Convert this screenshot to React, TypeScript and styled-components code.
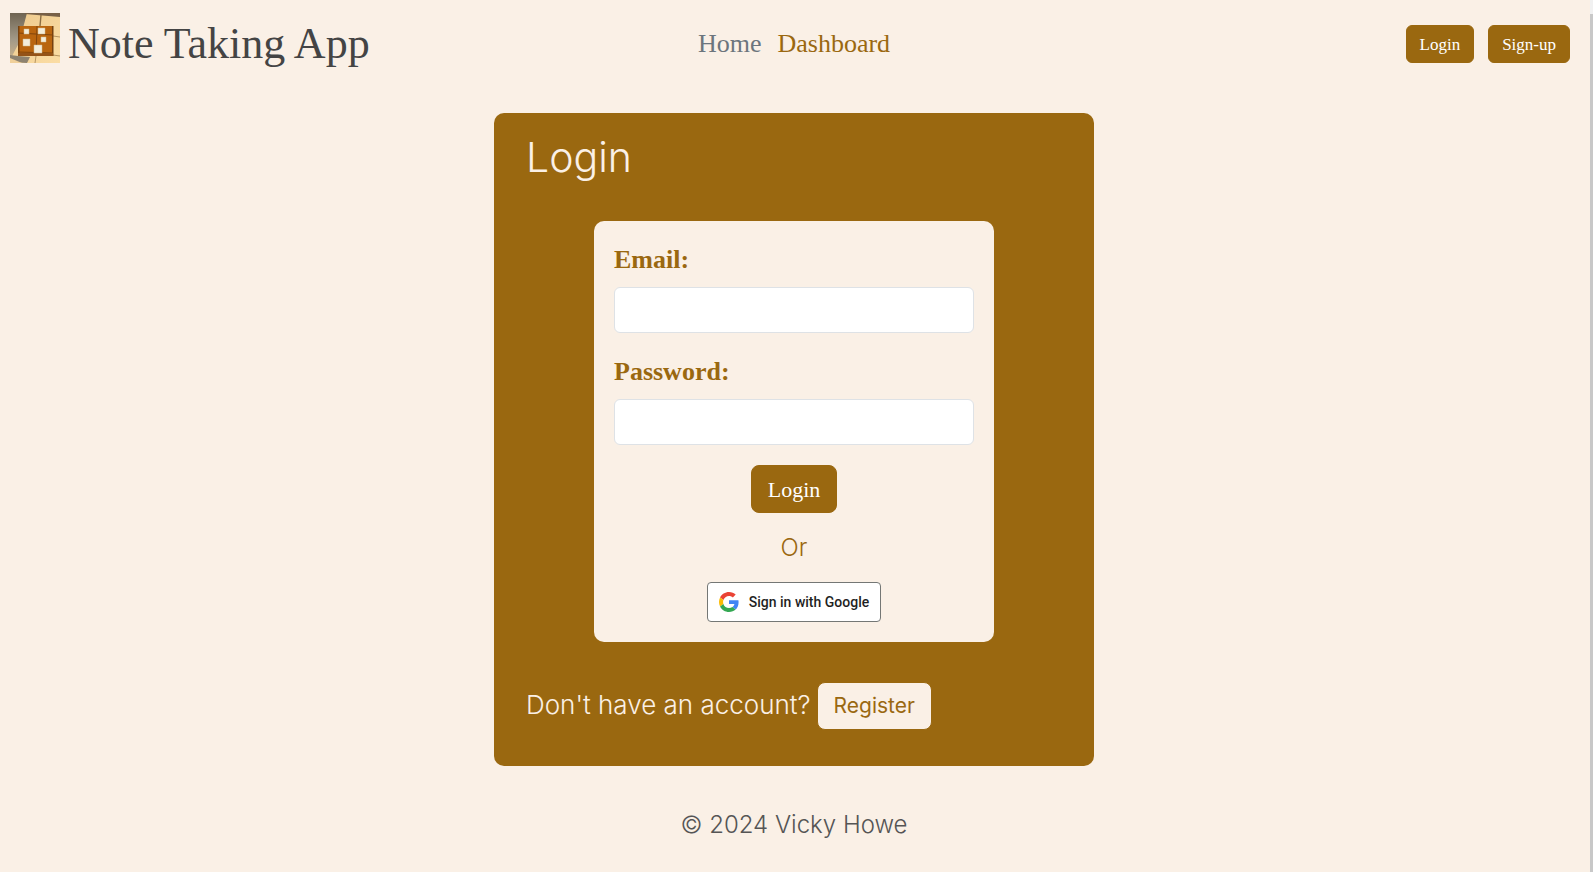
import React from "react";
import styled, { createGlobalStyle } from "styled-components";

const brown = "#9a6810";
const cream = "#faf0e6";
const serif = `"Liberation Serif", serif`;
const sans = `Inter, sans-serif`;

const GlobalStyle = createGlobalStyle`
  *, *::before, *::after { box-sizing: border-box; }
  body {
    margin: 0;
    background: ${cream};
    color: #555;
    font: 300 24px/36px ${sans};
  }
  h1, h2, p { margin: 0; }
`;

const Shell = styled.div`
  display: grid;
  grid-template-columns: 1fr 3px;
  column-gap: 2px;
  min-height: 100vh;
`;

const Page = styled.div`
  display: flex;
  flex-direction: column;
`;

const ScrollTrack = styled.div`
  padding-top: 14px;
  background: #f1f1f1;
  display: flex;
`;

const ScrollThumb = styled.div`
  flex: 1;
  background: #c8c8c8;
`;

const Header = styled.header`
  display: grid;
  grid-template-columns: 1fr auto 1fr;
  align-items: center;
  height: 88px;
  padding: 0 10px;
`;

const Brand = styled.div`
  display: flex;
  align-items: center;
  gap: 8px;
  padding-bottom: 12px;
`;

const Logo = styled.svg`
  width: 50px;
  height: 50px;
  flex: none;
`;

const Title = styled.h1`
  padding-top: 12px;
  color: #444;
  font: 400 44px/52px ${serif};
  white-space: nowrap;
`;

const Nav = styled.nav`
  display: flex;
  gap: 16px;
`;

const NavLink = styled.a<{ $muted?: boolean }>`
  color: ${(p) => (p.$muted ? "#6c757d" : brown)};
  font: 400 26px/36px ${serif};
  text-decoration: none;
`;

const Actions = styled.div`
  display: flex;
  justify-content: flex-end;
  gap: 14px;
  padding-right: 8px;
`;

const Button = styled.button<{ $large?: boolean }>`
  height: ${(p) => (p.$large ? 48 : 38)}px;
  padding: 2px ${(p) => (p.$large ? 16 : 13)}px 0;
  border: 1px solid ${brown};
  border-radius: ${(p) => (p.$large ? 8 : 6)}px;
  background: ${brown};
  color: #fff;
  font: 400 ${(p) => (p.$large ? 22 : 17)}px/24px ${serif};
`;

const Card = styled.main`
  width: 100%;
  max-width: 600px;
  margin: 25px auto 0;
  padding: 20px 32px 36px;
  border-radius: 10px;
  background: ${brown};
  color: ${cream};
`;

const CardTitle = styled.h2`
  font: 300 41px/48px ${sans};
`;

const Form = styled.form`
  display: flex;
  flex-direction: column;
  align-items: center;
  max-width: 400px;
  margin: 40px auto;
  padding: 20px;
  border-radius: 10px;
  background: ${cream};
  color: ${brown};
`;

const Field = styled.div`
  display: flex;
  flex-direction: column;
  gap: 8px;
  width: 100%;
  margin-bottom: 20px;
`;

const Label = styled.label`
  font: 700 26px/38px ${serif};
`;

const Input = styled.input`
  width: 100%;
  height: 46px;
  padding: 6px 12px;
  border: 1px solid #dee2e6;
  border-radius: 6px;
  background: #fff;
  font: 400 20px/30px ${serif};
`;

const Or = styled.p`
  margin: 17px 0 16px;
`;

const GoogleButton = styled.button`
  display: flex;
  align-items: center;
  gap: 10px;
  height: 40px;
  padding: 0 11px;
  border: 1px solid #747775;
  border-radius: 4px;
  background: #fff;
  color: #1f1f1f;
  font: 500 14px/20px Roboto, sans-serif;
`;

const GoogleMark = styled.svg`
  width: 20px;
  height: 20px;
`;

const SignupRow = styled.div`
  display: flex;
  align-items: center;
  gap: 6px;
`;

const Prompt = styled.p`
  padding-bottom: 2px;
  font-size: 26px;
`;

const RegisterButton = styled.button`
  height: 48px;
  padding: 0 16px;
  border: 1px solid ${brown};
  border-radius: 8px;
  background: ${cream};
  color: ${brown};
  font: 400 21px/30px ${sans};
`;

const Footer = styled.footer`
  padding: 41px 0;
  text-align: center;
`;

function BrandLogo() {
  return (
    <Logo viewBox="0 0 50 50" role="img" aria-label="Note board">
      <defs>
        <linearGradient id="wall" x1="0" y1="0" x2="1" y2="1">
          <stop offset="0" stopColor="#edc98c" />
          <stop offset="1" stopColor="#fbdda4" />
        </linearGradient>
        <linearGradient id="shade" x1="0" y1="0" x2="0" y2="1">
          <stop offset="0" stopColor="#6f6452" />
          <stop offset="0.6" stopColor="#a39a88" />
          <stop offset="1" stopColor="#c9b28c" />
        </linearGradient>
      </defs>
      <path d="M0 0h50v50H0z" fill="url(#wall)" />
      <path d="M0 0h17L9 30 1 45H0z" fill="url(#shade)" />
      <path d="M15 0h35v4L15 1z" fill="#776047" />
      <path d="M0 42l8 1 12 1-3 6-17-1z" fill="#8e8370" />
      <path d="M0 45l12 5H0z" fill="#f0d09a" />
      <path d="M26 43l-1 7M43 23l7 1M43 42l7 1" stroke="#b59461" fill="none" />
      <path d="M31 2l-1 11" stroke="#8b6d43" strokeWidth="1.4" />
      <path d="M8 13h35v30H8z" fill="#b9650f" />
      <path d="M8 13h1.5v30H8zM42 13h1.5v30H42z" fill="#76410f" />
      <path d="M8 20l35 2M27 13l-1 30M8 39l35 1" stroke="#81450c" fill="none" />
      <path d="M8 40h35v3H8z" fill="#945317" />
      <g fill="#f3eddb" stroke="#d3b98b" strokeWidth="0.5">
        <path d="M14 16h5v5h-5zM28 15h7v6h-7zM13 26h7v7h-7zM31 24h5v5h-5zM24 32h8v8h-8z" />
      </g>
    </Logo>
  );
}

function GoogleLogo() {
  return (
    <GoogleMark viewBox="0 0 48 48" aria-hidden="true">
      <path fill="#EA4335" d="M24 9.5c3.54 0 6.71 1.22 9.21 3.6l6.85-6.85C35.9 2.38 30.47 0 24 0 14.62 0 6.51 5.38 2.56 13.22l7.98 6.19C12.43 13.72 17.74 9.5 24 9.5z" />
      <path fill="#4285F4" d="M46.98 24.55c0-1.57-.15-3.09-.38-4.55H24v9.02h12.94c-.58 2.96-2.26 5.48-4.78 7.18l7.73 6c4.51-4.18 7.09-10.36 7.09-17.65z" />
      <path fill="#FBBC05" d="M10.53 28.59c-.48-1.45-.76-2.99-.76-4.59s.27-3.14.76-4.59l-7.98-6.19C.92 16.46 0 20.12 0 24c0 3.88.92 7.54 2.56 10.78l7.97-6.19z" />
      <path fill="#34A853" d="M24 48c6.48 0 11.93-2.13 15.89-5.81l-7.73-6c-2.15 1.45-4.92 2.3-8.16 2.3-6.26 0-11.57-4.22-13.47-9.91l-7.98 6.19C6.51 42.62 14.62 48 24 48z" />
    </GoogleMark>
  );
}

export default function App() {
  return (
    <>
      <GlobalStyle />
      <Shell>
        <Page>
          <Header>
            <Brand>
              <BrandLogo />
              <Title>Note Taking App</Title>
            </Brand>
            <Nav aria-label="Main">
              <NavLink href="#home" $muted>Home</NavLink>
              <NavLink href="#dashboard">Dashboard</NavLink>
            </Nav>
            <Actions>
              <Button type="button">Login</Button>
              <Button type="button">Sign-up</Button>
            </Actions>
          </Header>
          <Card>
            <CardTitle>Login</CardTitle>
            <Form onSubmit={(e) => e.preventDefault()}>
              <Field>
                <Label htmlFor="email">Email:</Label>
                <Input id="email" type="email" />
              </Field>
              <Field>
                <Label htmlFor="password">Password:</Label>
                <Input id="password" type="password" />
              </Field>
              <Button type="submit" $large>Login</Button>
              <Or>Or</Or>
              <GoogleButton type="button">
                <GoogleLogo />
                Sign in with Google
              </GoogleButton>
            </Form>
            <SignupRow>
              <Prompt>Don't have an account?</Prompt>
              <RegisterButton type="button">Register</RegisterButton>
            </SignupRow>
          </Card>
          <Footer>© 2024 Vicky Howe</Footer>
        </Page>
        <ScrollTrack aria-hidden="true">
          <ScrollThumb />
        </ScrollTrack>
      </Shell>
    </>
  );
}
